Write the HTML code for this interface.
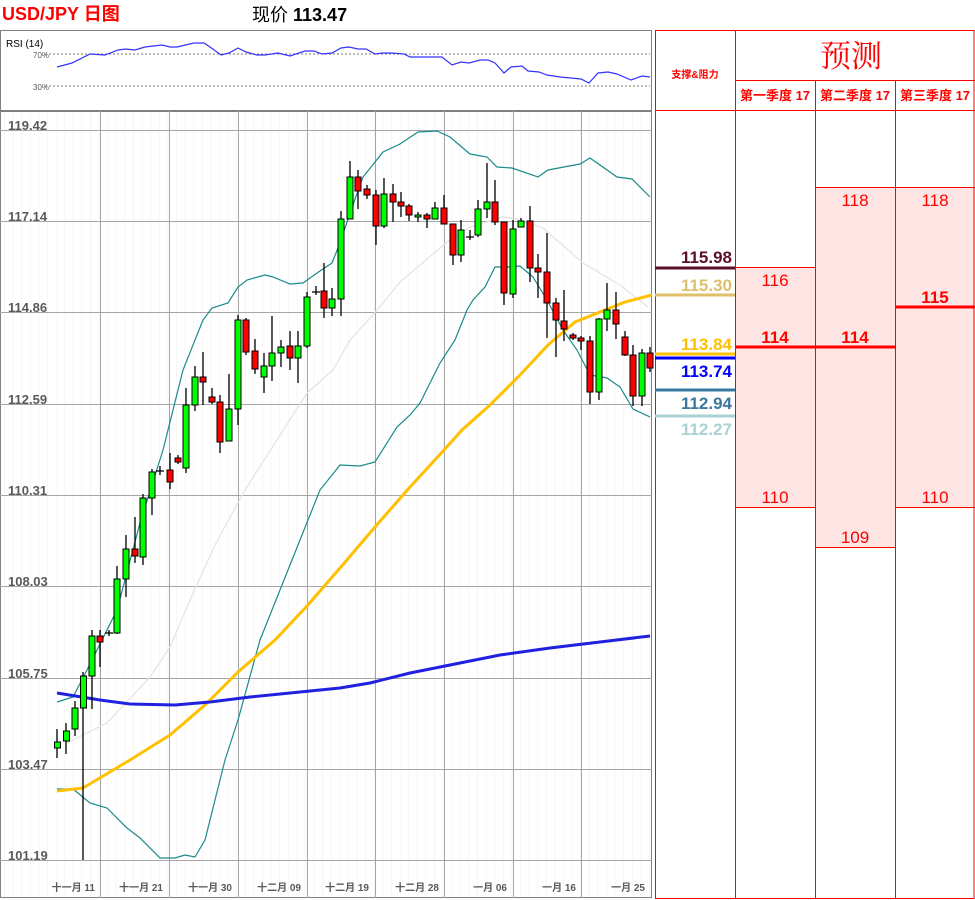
<!DOCTYPE html>
<html><head><meta charset="utf-8"><style>
html,body{margin:0;padding:0;background:#fff;width:975px;height:900px;overflow:hidden}
svg{display:block}
text{font-family:"Liberation Sans","Noto Sans CJK SC",sans-serif}
.px{font-size:13px;font-weight:bold;fill:#595959}
.dt{font-size:10px;font-weight:bold;fill:#595959}
.r{fill:#ff0000;font-size:17px;text-anchor:middle}
.q{fill:#ff0000;font-size:13px;font-weight:bold;text-anchor:middle}
.lv{font-size:17px;font-weight:bold;text-anchor:end}
</style></head><body>
<svg width="975" height="900" viewBox="0 0 975 900" xmlns="http://www.w3.org/2000/svg">
<defs>
<pattern id="mg" x="4" y="0" width="8.6" height="900" patternUnits="userSpaceOnUse"><line x1="0.5" y1="0" x2="0.5" y2="900" stroke="#f6f6f6" stroke-width="1"/></pattern>
</defs>
<text x="2" y="20" style="font-size:18px;font-weight:bold;fill:#ff0000">USD/JPY 日图</text>
<text x="252" y="21" style="font-size:18px;fill:#000">现价 <tspan font-weight="bold">113.47</tspan></text>

<rect x="0.5" y="30.5" width="651" height="80" fill="#fff" stroke="#808080"/>
<text x="6" y="47" style="font-size:10px;fill:#000">RSI (14)</text>
<line x1="45" y1="54" x2="650" y2="54" stroke="#777" stroke-dasharray="2,2"/>
<line x1="45" y1="86" x2="650" y2="86" stroke="#777" stroke-dasharray="2,2"/>
<text x="33" y="58" style="font-size:8px;fill:#595959">70%</text>
<text x="33" y="90" style="font-size:8px;fill:#595959">30%</text>
<polyline fill="none" stroke="#3333ff" stroke-width="1.2" points="57,67 72,63 90,54 105,55 118,50 126,49 135,50 145,47 162,45 170,47 177,47 194,43 204,43 210,47 221,55 229,53 238,48 246,52 257,55 265,55 278,53 290,56 305,51 314,51 322,54 332,53 341,48 349,47 358,49 366,49 375,54 383,53 391,53 404,54 410,57 421,57 433,57 442,57 452,65 461,62 469,63 480,60 488,60 495,63 504,73 511,67 522,66 528,71 539,72 547,75 560,77 581,79 589,83 598,73 608,72 617,74 631,80 642,76 650,77"/>

<rect x="0.5" y="111.5" width="651" height="786" fill="url(#mg)" stroke="#808080"/>
<g stroke="#a6a6a6" stroke-width="1">
<line x1="0" y1="130.5" x2="652" y2="130.5"/><line x1="0" y1="221.5" x2="652" y2="221.5"/><line x1="0" y1="312.5" x2="652" y2="312.5"/><line x1="0" y1="404.5" x2="652" y2="404.5"/><line x1="0" y1="495.5" x2="652" y2="495.5"/><line x1="0" y1="586.5" x2="652" y2="586.5"/><line x1="0" y1="678.5" x2="652" y2="678.5"/><line x1="0" y1="769.5" x2="652" y2="769.5"/><line x1="0" y1="860.5" x2="652" y2="860.5"/>
<line x1="100.5" y1="111" x2="100.5" y2="898"/><line x1="169.5" y1="111" x2="169.5" y2="898"/><line x1="238.5" y1="111" x2="238.5" y2="898"/><line x1="307.5" y1="111" x2="307.5" y2="898"/><line x1="375.5" y1="111" x2="375.5" y2="898"/><line x1="444.5" y1="111" x2="444.5" y2="898"/><line x1="513.5" y1="111" x2="513.5" y2="898"/><line x1="581.5" y1="111" x2="581.5" y2="898"/>
</g>
<text class="px" x="8" y="130">119.42</text>
<text class="px" x="8" y="221">117.14</text>
<text class="px" x="8" y="312">114.86</text>
<text class="px" x="8" y="404">112.59</text>
<text class="px" x="8" y="495">110.31</text>
<text class="px" x="8" y="586">108.03</text>
<text class="px" x="8" y="678">105.75</text>
<text class="px" x="8" y="769">103.47</text>
<text class="px" x="8" y="860">101.19</text>
<g class="dt" text-anchor="end">
<text x="95" y="891">十一月 11</text><text x="163" y="891">十一月 21</text><text x="232" y="891">十一月 30</text><text x="301" y="891">十二月 09</text><text x="369" y="891">十二月 19</text><text x="439" y="891">十二月 28</text><text x="507" y="891">一月 06</text><text x="576" y="891">一月 16</text><text x="645" y="891">一月 25</text>
</g>

<polyline fill="none" stroke="#e3e3e3" stroke-width="1.2" points="67,743 107,723 150,677 170,647 190,600 215,545 245,490 307,393 333,370 350,340 373,315 400,282 447,242 470,227 503,217 517,219 543,228 583,263 620,285 648,307"/>
<polyline fill="none" stroke="#1a8a8a" stroke-width="1.2" points="57,702 73,697 87,670 117,610 140,523 163,450 183,370 203,320 212,308 228,303 238,287 247,280 265,275 273,277 290,284 303,283 317,273 332,263 340,243 350,213 363,177 383,152 400,144 418,132 437,131 450,137 470,154 487,157 497,167 512,168 538,177 548,170 580,164 590,158 617,177 632,179 650,197"/>
<polyline fill="none" stroke="#1a8a8a" stroke-width="1.2" points="57,789 73,789 90,803 107,808 127,828 140,838 160,858 175,858 185,855 195,857 205,840 215,800 225,760 238,720 260,640 280,590 300,540 320,490 340,465 360,466 375,462 397,427 410,415 420,403 440,363 455,340 467,310 473,300 485,287 495,267 507,267 520,266 533,277 547,300 563,330 577,350 590,375 607,378 620,387 633,409 650,417"/>
<polyline fill="none" stroke="#ffc000" stroke-width="3" stroke-linejoin="round" points="57,791 83,788 130,760 170,735 205,705 238,672 275,640 307,606 340,568 375,527 410,487 444,450 462,430 490,405 520,375 548,345 575,322 605,310 625,302 652,295"/>
<polyline fill="none" stroke="#2020e0" stroke-width="3" stroke-linejoin="round" points="57,693 100,700 130,704 175,705 210,702 250,697 300,692 340,688 370,683 410,673 450,665 500,655 550,648 600,642 650,636"/>

<path stroke="#000" stroke-width="1.3" fill="none" d="M57 729V758M66 723V754M75 701V736M83 672V860M92 630V709M100 630V667M109 630V636M117 566V634M126 535V597M135 517V563M143 494V565M152 469V515M160 466V475M170 453V489M178 455V464M186 388V473M195 366V411M203 352V405M212 388V404M220 395V453M229 374V441M238 315V425M246 318V355M255 339V374M264 353V393M272 316V381M281 340V367M290 331V370M298 331V383M307 292V348M316 286V295M324 263V318M332 288V316M341 211V316M350 161V219M358 170V209M367 185V199M376 190V245M384 178V228M393 184V222M401 192V217M409 204V221M418 212V222M427 213V228M435 202V219M444 195V224M453 224V265M461 220V262M470 230V240M478 200V237M487 163V218M495 180V225M504 222V305M513 220V298M521 218V227M530 206V282M538 254V298M547 233V338M556 298V357M564 290V341M573 333V340M581 336V350M590 336V404M599 318V400M607 283V331M616 292V339M625 331V356M633 345V406M642 349V406M650 347V372M105 633H113M156 471H164M312 292H320M466 237H474"/>
<g stroke="#000" stroke-width="1">
<g fill="#00ff00">
<rect x="54.5" y="742" width="6" height="6"/><rect x="63.5" y="731" width="6" height="10"/><rect x="72" y="708" width="6" height="21"/><rect x="80.5" y="676" width="6" height="32"/><rect x="89" y="636" width="6" height="40"/><rect x="114" y="579" width="6" height="54"/><rect x="123" y="549" width="6" height="30"/><rect x="140" y="498" width="6" height="59"/><rect x="149" y="472" width="6" height="26"/><rect x="183" y="405" width="6" height="63"/><rect x="192" y="377" width="6" height="28"/><rect x="226" y="409" width="6" height="32"/><rect x="235" y="320" width="6" height="89"/><rect x="261" y="366" width="6" height="11"/><rect x="269" y="353" width="6" height="13"/><rect x="278" y="347" width="6" height="6"/><rect x="295" y="346" width="6" height="12"/><rect x="304" y="297" width="6" height="49"/><rect x="329" y="299" width="6" height="9"/><rect x="338" y="219" width="6" height="80"/><rect x="347" y="177" width="6" height="42"/><rect x="381" y="194" width="6" height="32"/><rect x="415" y="215" width="6" height="2"/><rect x="432" y="208" width="6" height="11"/><rect x="458" y="230" width="6" height="25"/><rect x="475" y="209" width="6" height="26"/><rect x="484" y="202" width="6" height="7"/><rect x="510" y="229" width="6" height="65"/><rect x="518" y="221" width="6" height="6"/><rect x="596" y="319" width="6" height="73"/><rect x="604" y="310" width="6" height="9"/><rect x="639" y="353" width="6" height="43"/>
</g>
<g fill="#ff0000">
<rect x="97" y="636" width="6" height="6"/><rect x="132" y="549" width="6" height="7"/><rect x="167" y="470" width="6" height="12"/><rect x="175" y="458" width="6" height="4"/><rect x="200" y="377" width="6" height="5"/><rect x="209" y="397" width="6" height="5"/><rect x="217" y="402" width="6" height="40"/><rect x="243" y="320" width="6" height="32"/><rect x="252" y="351" width="6" height="18"/><rect x="287" y="346" width="6" height="12"/><rect x="321" y="291" width="6" height="17"/><rect x="355" y="177" width="6" height="14"/><rect x="364" y="189" width="6" height="6"/><rect x="373" y="195" width="6" height="31"/><rect x="390" y="194" width="6" height="8"/><rect x="398" y="202" width="6" height="4"/><rect x="406" y="206" width="6" height="9"/><rect x="424" y="215" width="6" height="4"/><rect x="441" y="208" width="6" height="16"/><rect x="450" y="224" width="6" height="31"/><rect x="492" y="202" width="6" height="20"/><rect x="501" y="222" width="6" height="71"/><rect x="527" y="221" width="6" height="47"/><rect x="535" y="268" width="6" height="4"/><rect x="544" y="272" width="6" height="31"/><rect x="553" y="303" width="6" height="17"/><rect x="561" y="321" width="6" height="8"/><rect x="570" y="335" width="6" height="3"/><rect x="578" y="338" width="6" height="3"/><rect x="587" y="341" width="6" height="51"/><rect x="613" y="310" width="6" height="14"/><rect x="622" y="337" width="6" height="18"/><rect x="630" y="355" width="6" height="41"/><rect x="647" y="353" width="6" height="15"/>
</g>
</g>

<rect x="735" y="267" width="80" height="240" fill="#ffe4e4"/>
<rect x="815" y="187" width="80" height="360" fill="#ffe4e4"/>
<rect x="895" y="187" width="80" height="320" fill="#ffe4e4"/>
<g stroke="#ff0000" stroke-width="1" fill="none">
<rect x="655.5" y="30.5" width="318.5" height="868"/>
<line x1="735.5" y1="30" x2="735.5" y2="899"/>
<line x1="815.5" y1="80" x2="815.5" y2="899"/>
<line x1="895.5" y1="80" x2="895.5" y2="899"/>
<line x1="735" y1="80.5" x2="975" y2="80.5"/>
<line x1="655" y1="110.5" x2="975" y2="110.5"/>
<line x1="735" y1="267.5" x2="815" y2="267.5"/><line x1="735" y1="507.5" x2="815" y2="507.5"/>
<line x1="815" y1="187.5" x2="975" y2="187.5"/><line x1="815" y1="547.5" x2="895" y2="547.5"/>
<line x1="895" y1="507.5" x2="975" y2="507.5"/>
</g>
<g stroke="#ff0000" stroke-width="3">
<line x1="735" y1="347" x2="895" y2="347"/>
<line x1="895" y1="307" x2="975" y2="307"/>
</g>
<text x="695" y="78" style="font-size:10px;font-weight:bold;fill:#ff0000;text-anchor:middle">支撑&amp;阻力</text>
<text x="851" y="67" style="font-family:'Liberation Serif','Noto Serif CJK SC',serif;font-size:31px;fill:#ff0000;text-anchor:middle">预测</text>
<text class="q" x="775" y="100">第一季度 17</text>
<text class="q" x="855" y="100">第二季度 17</text>
<text class="q" x="935" y="100">第三季度 17</text>
<text class="r" x="775" y="286">116</text>
<text class="r" x="775" y="343" font-weight="bold">114</text>
<text class="r" x="775" y="503">110</text>
<text class="r" x="855" y="206">118</text>
<text class="r" x="855" y="343" font-weight="bold">114</text>
<text class="r" x="855" y="543">109</text>
<text class="r" x="935" y="206">118</text>
<text class="r" x="935" y="303" font-weight="bold">115</text>
<text class="r" x="935" y="503">110</text>

<line x1="655" y1="268" x2="735" y2="268" stroke="#5c0f2c" stroke-width="3"/>
<text class="lv" x="732" y="263" fill="#5c0f2c">115.98</text>
<line x1="655" y1="295" x2="735" y2="295" stroke="#dfc06a" stroke-width="3"/>
<text class="lv" x="732" y="291" fill="#dfc06a">115.30</text>
<line x1="655" y1="354" x2="735" y2="354" stroke="#ffc000" stroke-width="3"/>
<text class="lv" x="732" y="350" fill="#ffc000">113.84</text>
<line x1="655" y1="358" x2="735" y2="358" stroke="#0000ff" stroke-width="3"/>
<text class="lv" x="732" y="377" fill="#0000ff">113.74</text>
<line x1="655" y1="390" x2="735" y2="390" stroke="#3a78a0" stroke-width="3"/>
<text class="lv" x="732" y="409" fill="#3a78a0">112.94</text>
<line x1="655" y1="416" x2="735" y2="416" stroke="#a9d2d2" stroke-width="3"/>
<text class="lv" x="732" y="435" fill="#a9d2d2">112.27</text>
</svg>
</body></html>
